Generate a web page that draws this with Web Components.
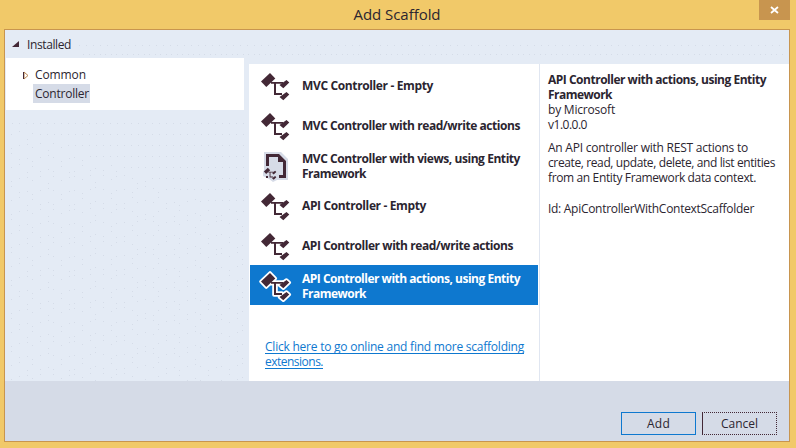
<!DOCTYPE html>
<html lang="en"><head><meta charset="utf-8"><title>Add Scaffold</title>
<style>html,body{margin:0;width:796px;height:448px;overflow:hidden}body{font:12px/15px "Open Sans","Noto Sans",sans-serif;color:#2b2530}</style></head>
<body><scaffold-dialog></scaffold-dialog>
<script>
class TextLine extends HTMLElement{
  connectedCallback(){
    this.attachShadow({mode:'open'}).innerHTML='<style>:host{display:block;white-space:nowrap;width:max-content}:host([underlined]) span{box-shadow:inset 0 -1px currentColor}span{display:inline-block;vertical-align:top}</style><span><slot></slot></span>';
    const s=this.shadowRoot.querySelector('span'),w=+this.getAttribute('w');
    if(w){const n=this.textContent.length;s.style.letterSpacing=((w-s.getBoundingClientRect().width)/n)+'px';}
  }
}
customElements.define('text-line',TextLine);

const tree='<path d="M2 12.5 11 4l5.3 5.5-9 8.5z"/><path d="M12 13h12v1.8h-7V24h6v2h-8V14.8h-3z"/><path d="M20.5 16l7-5 2.8 2.5-6 5.7zM20.5 28l7-5 2.8 2.5-6 5.7z"/>';
class ScaffoldIcon extends HTMLElement{
  connectedCallback(){
    const k=this.getAttribute('kind');
    let g=`<g fill="#432836">${tree}</g>`;
    if(k==='halo')g=`<g fill="#fff" stroke="#fff" stroke-width="3.6" stroke-linejoin="round">${tree}</g>`+g;
    if(k==='page')g='<path fill="#d6dbe7" d="M5 3h17l7 7v21H18l-4 2-4-3-6-3v-4l1-2z"/><path fill="#432836" d="M7 5h13l7 7v17h-7v-3h4V13h-5V8h-9v9H7z"/><g fill="#432836" transform="translate(4 17) scale(.44)">'+tree+'</g><path fill="#432836" d="M7 27h2v2H7z"/>';
    this.attachShadow({mode:'open'}).innerHTML=`<style>:host{display:block;width:32px;height:32px}svg{display:block;overflow:visible}</style><svg width="32" height="32">${g}</svg>`;
  }
}
customElements.define('scaffold-icon',ScaffoldIcon);

class ScaffoldItem extends HTMLElement{
  connectedCallback(){
    this.attachShadow({mode:'open'}).innerHTML=`<style>:host{display:flex;align-items:center;height:40px;padding-left:9px;gap:11px;margin:0 1px;font-weight:700;box-sizing:border-box}:host([selected]){background:#0e78cf;color:#fff}div{padding-top:1.5px}</style><scaffold-icon kind="${this.getAttribute('icon')||''}"></scaffold-icon><div><slot></slot></div>`;
  }
}
customElements.define('scaffold-item',ScaffoldItem);

class PushButton extends HTMLElement{
  connectedCallback(){
    this.attachShadow({mode:'open'}).innerHTML='<style>:host{display:flex;align-items:center;justify-content:center;box-sizing:border-box;width:75px;height:23px;border:1px solid #0e78cf}:host([kind=cancel]){border:1px dotted #432836;border-left-style:solid}</style><slot></slot>';
  }
}
customElements.define('push-button',PushButton);

class ScaffoldDialog extends HTMLElement{
  connectedCallback(){
    this.attachShadow({mode:'open'}).innerHTML=`<style>
:host{display:flex;flex-direction:column;box-sizing:border-box;width:796px;height:448px;padding:0 6px 6px 4px;background:#f1c969}
header{height:29px;display:grid;grid-template-columns:1fr auto 1fr;flex:none}
header text-line{font-size:15px;line-height:29px;grid-column:2}
.close{justify-self:end;width:31px;height:20px;background:#c8954f}
.frame{flex:1;border:1px solid #c8954f;display:flex;flex-direction:column}
.body{height:351px;display:flex;position:relative;background:#e4ebf5}
.dots{position:absolute;inset:0}
.nav{width:239px;position:relative;flex:none}
.group{display:flex;height:28px;align-items:center;padding-left:7px;gap:8px}
.tree{margin-left:1px;height:52px;background:#fff;box-sizing:border-box;padding-top:8px}
.node{display:flex;align-items:center;gap:6px;height:18px;padding-left:17px}
.node text-line{margin-bottom:2px}
.sel{background:#d5dbe7;margin-left:27px;width:57px;height:19px;box-sizing:border-box;display:flex;align-items:center;padding-left:2px}
.list{position:relative;margin:34px 0 0 5px;width:290px;background:#fff;padding-top:1px;box-sizing:border-box}
.link{margin:34px 0 0 16px;color:#0e78cf}
.detail{position:relative;flex:1;margin-top:34px;border-left:1px solid #e0e6f1;background:#fff;padding:8px 0 0 8px}
.detail p{margin:0 0 8px}.detail p+p{margin-bottom:16px}
b{display:block}
footer{flex:1;background:#d5dbe7;display:flex;justify-content:flex-end;gap:6px;padding:31px 12px 0 0}
svg{display:block}
</style>
<header><text-line w="87">Add Scaffold</text-line><div class="close"><svg width="31" height="20"><path d="m12 7 7 6M19 7l-7 6" stroke="#fff" stroke-width="1.8"/></svg></div></header>
<div class="frame"><div class="body">
<svg class="dots" width="784" height="351"></svg>
<div class="nav"><div class="group"><svg width="7" height="7"><path d="M7 0v6H0z" fill="#432836"/></svg><text-line w="44">Installed</text-line></div>
<div class="tree"><div class="node"><svg width="6" height="9"><path d="M1 1v7l4-3.5z" fill="#fff" stroke="#b8834f"/><path d="M.5 1v7" stroke="#432836"/></svg><text-line w="51">Common</text-line></div><div class="sel"><text-line w="54">Controller</text-line></div></div></div>
<div class="list">
<scaffold-item><text-line w="131">MVC Controller - Empty</text-line></scaffold-item>
<scaffold-item><text-line w="218">MVC Controller with read/write actions</text-line></scaffold-item>
<scaffold-item icon="page"><text-line w="218">MVC Controller with views, using Entity</text-line><text-line w="64">Framework</text-line></scaffold-item>
<scaffold-item><text-line w="124">API Controller - Empty</text-line></scaffold-item>
<scaffold-item><text-line w="211">API Controller with read/write actions</text-line></scaffold-item>
<scaffold-item icon="halo" selected><text-line w="218">API Controller with actions, using Entity</text-line><text-line w="64">Framework</text-line></scaffold-item>
<div class="link"><text-line underlined w="259">Click here to go online and find more scaffolding</text-line><text-line underlined w="58">extensions.</text-line></div>
</div>
<div class="detail"><p><b><text-line w="218">API Controller with actions, using Entity</text-line><text-line w="64">Framework</text-line></b><text-line w="67">by Microsoft</text-line><text-line w="39">v1.0.0.0</text-line></p>
<p><text-line w="200">An API controller with REST actions to</text-line><text-line w="227">create, read, update, delete, and list entities</text-line><text-line w="208">from an Entity Framework data context.</text-line></p>
<text-line w="206">Id: ApiControllerWithContextScaffolder</text-line></div>
</div><footer><push-button><text-line w="23">Add</text-line></push-button><push-button kind="cancel"><text-line w="37">Cancel</text-line></push-button></footer></div>`;
    // Faint speckle over the pale background areas
    let d='';const dot=(x,y)=>d+=`M${x} ${y}h1v1h-1z`;
    for(let x=74;x<778;x+=7)dot(x,15);
    for(let x=78;x<778;x+=5.5)dot(Math.round(x),24);
    // Straight rows at the top, loosening into scattered dots further down
    for(let r=0;r<24;r++)for(let c=0;c<34;c++){
      const x=7+c*7,y=93+r*11,loose=r>c/4;
      if(loose)dot(x+(r*3+c)%3-1,y+(c*5+r*3+(c*c)%7)%9-3);else dot(x,y);
    }
    this.shadowRoot.querySelector('.dots').innerHTML=`<path d="${d}" fill="#d5dce8"/>`;
  }
}
customElements.define('scaffold-dialog',ScaffoldDialog);
</script></body></html>
